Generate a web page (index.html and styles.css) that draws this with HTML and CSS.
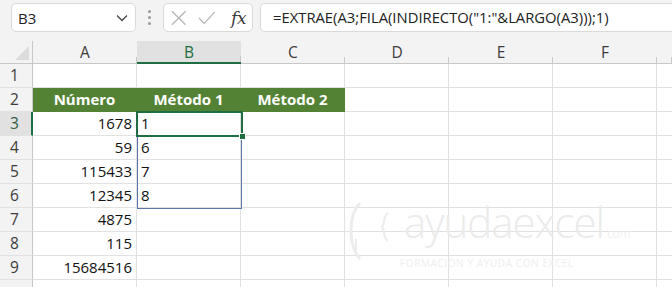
FILE: index.html
```html
<!DOCTYPE html>
<html lang="es">
<head>
<meta charset="utf-8">
<link rel="stylesheet" href="styles.css">
</head>
<body>
<div class="toolbar">
  <div class="namebox">
    <span class="name">B3</span>
    <svg class="chev" width="12" height="8" viewBox="0 0 12 8"><path d="M1 1.5 L6 6.5 L11 1.5" fill="none" stroke="#444" stroke-width="1.3"/></svg>
  </div>
  <div class="dots"><i></i><i></i><i></i></div>
  <div class="iconbox">
    <svg width="16" height="16" viewBox="0 0 16 16"><path d="M1 1 L15 15 M15 1 L1 15" stroke="#b4b4b4" stroke-width="1.3" fill="none"/></svg>
    <svg width="18" height="14" viewBox="0 0 18 14"><path d="M1 7 L6.5 12.5 L17 1" stroke="#b4b4b4" stroke-width="1.3" fill="none"/></svg>
    <span class="fx">fx</span>
  </div>
  <div class="formula">=EXTRAE(A3;FILA(INDIRECTO("1:"&amp;LARGO(A3)));1)</div>
</div>
<div class="sheet">
  <div class="grid">
    <div class="corner"><span class="tri"></span></div>
    <div class="ch">A</div><div class="ch sel">B</div><div class="ch">C</div><div class="ch">D</div><div class="ch">E</div><div class="ch">F</div><div class="ch last"></div>

    <div class="rh">1</div><div class="c"></div><div class="c"></div><div class="c"></div><div class="c"></div><div class="c"></div><div class="c"></div><div class="c last"></div>
    <div class="rh">2</div><div class="c hd">Número</div><div class="c hd">Método 1</div><div class="c hd">Método 2</div><div class="c"></div><div class="c"></div><div class="c"></div><div class="c last"></div>
    <div class="rh sel">3</div><div class="c num">1678</div><div class="c">1</div><div class="c"></div><div class="c"></div><div class="c"></div><div class="c"></div><div class="c last"></div>
    <div class="rh">4</div><div class="c num">59</div><div class="c">6</div><div class="c"></div><div class="c"></div><div class="c"></div><div class="c"></div><div class="c last"></div>
    <div class="rh">5</div><div class="c num">115433</div><div class="c">7</div><div class="c"></div><div class="c"></div><div class="c"></div><div class="c"></div><div class="c last"></div>
    <div class="rh">6</div><div class="c num">12345</div><div class="c">8</div><div class="c"></div><div class="c"></div><div class="c"></div><div class="c"></div><div class="c last"></div>
    <div class="rh">7</div><div class="c num">4875</div><div class="c"></div><div class="c"></div><div class="c"></div><div class="c"></div><div class="c"></div><div class="c last"></div>
    <div class="rh">8</div><div class="c num">115</div><div class="c"></div><div class="c"></div><div class="c"></div><div class="c"></div><div class="c"></div><div class="c last"></div>
    <div class="rh">9</div><div class="c num">15684516</div><div class="c"></div><div class="c"></div><div class="c"></div><div class="c"></div><div class="c"></div><div class="c last"></div>
    <div class="rh"></div><div class="c"></div><div class="c"></div><div class="c"></div><div class="c"></div><div class="c"></div><div class="c"></div><div class="c last"></div>
  </div>
  <div class="spill"></div>
  <div class="active"><span class="handle"></span></div>
  <div class="watermark">
    <svg class="wm-logo" width="50" height="64" viewBox="0 0 50 64"><path d="M14 4 C2 16 2 46 14 60" fill="none" stroke="#ececec" stroke-width="3"/><path d="M42 14 C36 18 40 24 36 28 C40 32 36 38 42 42" fill="none" stroke="#ececec" stroke-width="2"/><path d="M10 40 L10 52" stroke="#ececec" stroke-width="2"/></svg>
    <div class="wm-text">
      <span class="wm-main">ayudaexcel<small>.com</small></span>
      <span class="wm-sub">FORMACIÓN Y AYUDA CON EXCEL</span>
    </div>
  </div>
</div>
</body>
</html>
```
FILE: styles.css
```css
* { box-sizing: border-box; }
html, body { margin: 0; padding: 0; }
body {
  width: 672px;
  height: 287px;
  overflow: hidden;
  background: #ffffff;
  font-family: "Open Sans", "Noto Sans", sans-serif;
  color: #1f1f1f;
}
.toolbar {
  height: 41px;
  background: #f3f3f3;
  display: flex;
  align-items: flex-start;
  padding: 3px 0 0 11px;
  white-space: nowrap;
}
.namebox {
  width: 125px;
  height: 29px;
  background: #fff;
  border: 1px solid #dadada;
  border-radius: 5px;
  display: flex;
  align-items: center;
  justify-content: space-between;
  padding: 0 7px 0 6px;
  font-size: 15px;
  color: #222;
}
.dots {
  width: 27px;
  height: 29px;
  display: flex;
  flex-direction: column;
  align-items: center;
  justify-content: center;
  gap: 3px;
}
.dots i {
  display: block;
  width: 3px;
  height: 3px;
  border-radius: 50%;
  background: #9a9a9a;
}
.iconbox {
  width: 90px;
  height: 29px;
  background: #fff;
  border: 1px solid #dadada;
  border-radius: 5px;
  display: flex;
  align-items: center;
  padding: 0 6px 0 7px;
  gap: 11px;
}
.fx {
  font-family: "DejaVu Serif", "Liberation Serif", serif;
  font-style: italic;
  font-size: 17px;
  color: #3a3a3a;
  margin-left: 5px;
  letter-spacing: -0.5px;
}
.formula {
  margin-left: 7px;
  flex: 1;
  height: 29px;
  background: #fff;
  border: 1px solid #dadada;
  border-right: none;
  border-radius: 5px 0 0 5px;
  padding: 3px 0 0 12px;
  font-size: 14.8px;
  color: #222;
}
.sheet {
  position: relative;
}
.grid {
  display: grid;
  grid-template-columns: 33px repeat(6, 104px) 15px;
  grid-template-rows: 23px repeat(10, 24px);
}
.corner {
  background: #f3f3f3;
  border-right: 1px solid #c8c8c8;
  border-bottom: 1px solid #c8c8c8;
  position: relative;
}
.tri {
  position: absolute;
  right: 3px;
  bottom: 3px;
  width: 0;
  height: 0;
  border-left: 14px solid transparent;
  border-bottom: 14px solid #dcdcdc;
}
.ch {
  background: #f3f3f3;
  border-bottom: 1px solid #c8c8c8;
  position: relative;
  text-align: center;
  font-size: 15.5px;
  line-height: 22px;
  color: #3c3c3c;
}
.ch::after {
  content: "";
  position: absolute;
  right: 0;
  bottom: 0;
  width: 1px;
  height: 6px;
  background: #c8c8c8;
}
.ch.sel {
  background: #e1e1e1;
  color: #1e6e42;
  border-bottom: 2px solid #1e6e42;
}
.rh {
  background: #f3f3f3;
  border-right: 1px solid #c8c8c8;
  border-bottom: 1px solid #e1e1e1;
  font-size: 15.5px;
  line-height: 23px;
  padding-left: 10px;
  color: #3c3c3c;
}
.rh.sel {
  background: #e1e1e1;
  color: #2f5d44;
  border-right: 2px solid #1e6e42;
}
.c {
  border-right: 1px solid #e1e1e1;
  border-bottom: 1px solid #e1e1e1;
  font-size: 15px;
  line-height: 23px;
  padding: 0 4px;
  color: #111;
}
.c.last { border-right: none; }
.c.num { text-align: right; }
.c.hd {
  background: #548235;
  border-color: #548235;
  color: #fff;
  font-weight: 700;
  text-align: center;
}
.spill {
  position: absolute;
  left: 137px;
  top: 71px;
  width: 105px;
  height: 97px;
  border: 1px solid #5b76a8;
}
.active {
  position: absolute;
  left: 136px;
  top: 70px;
  width: 107px;
  height: 26px;
  border: 2px solid #1e6e42;
}
.handle {
  position: absolute;
  right: -5px;
  bottom: -5px;
  width: 7px;
  height: 7px;
  background: #1e6e42;
  border: 1px solid #fff;
}
.watermark {
  position: absolute;
  left: 346px;
  top: 158px;
  display: flex;
  align-items: flex-start;
  gap: 8px;
  pointer-events: none;
}
.wm-text {
  display: flex;
  flex-direction: column;
  color: #ebebeb;
}
.wm-main {
  font-family: "Open Sans", sans-serif;
  font-weight: 300;
  font-size: 42px;
  line-height: 46px;
  letter-spacing: -1px;
}
.wm-main small {
  font-size: 12px;
  letter-spacing: 0;
}
.wm-sub {
  font-size: 10px;
  line-height: 12px;
  margin-left: -4px;
  letter-spacing: 0.6px;
  color: #eeeeee;
}
```
